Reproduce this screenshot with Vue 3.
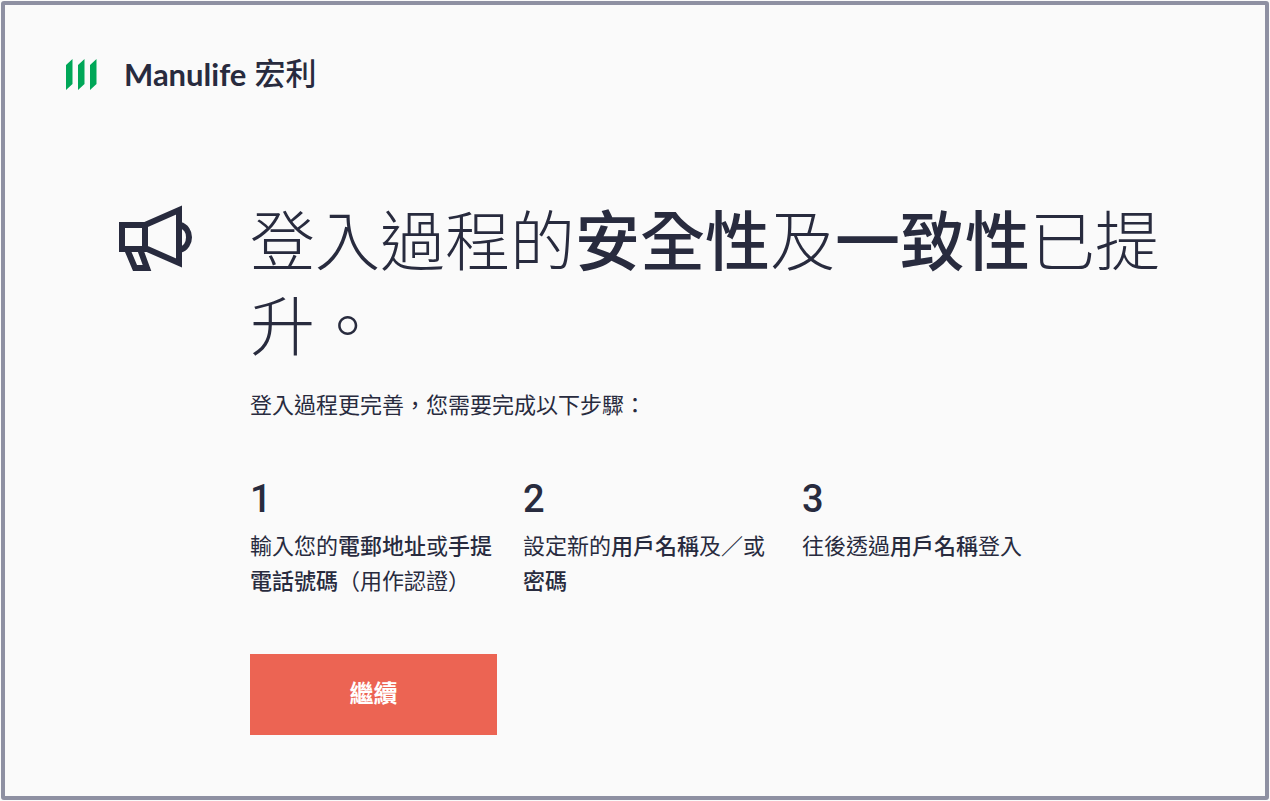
<script setup>
const steps = [
  { n: 1, parts: [['輸入您的', 0], ['電郵地址', 1], ['或', 0], ['手提電話號碼', 1], ['（用作認證）', 0]] },
  { n: 2, parts: [['設定新的', 0], ['用戶名稱', 1], ['及／或', 0], ['密碼', 1]] },
  { n: 3, parts: [['往後透過', 0], ['用戶名稱', 1], ['登入', 0]] },
]
</script>

<template>
  <main class="page">
    <header class="brand">
      <svg class="mark" viewBox="0 0 32 32" aria-hidden="true">
        <path d="M0 7 6.500 1v25L0 32zM12 7l6.500-6v25L12 32zM24 7l6.500-6v25L24 32z" fill="#00a758" />
      </svg>
      <span class="name">Manulife</span>
      <span class="zh">宏利</span>
    </header>
    <div class="content">
      <svg class="horn" viewBox="0 0 76 68" aria-hidden="true">
        <g fill="none" stroke="#282b3e" stroke-width="6">
          <path d="M4 20h23v24H4zM27 20 61 5v53L27 43M62 20c12 3 12 21 0 25M9 44l8 19h12l-7-19" />
        </g>
      </svg>
      <section class="body">
        <h1>登入過程的<b>安全性</b>及<b>一致性</b>已提升。</h1>
        <p class="intro">登入過程更完善，您需要完成以下步驟：</p>
        <ol class="steps">
          <li v-for="s in steps" :key="s.n">
            <span class="num">{{ s.n }}</span>
            <p><component :is="p[1] ? 'b' : 'span'" v-for="p in s.parts" :key="p[0]">{{ p[0] }}</component></p>
          </li>
        </ol>
        <button type="button">繼續</button>
      </section>
    </div>
  </main>
</template>

<style>
body { background: #fafafa; }
</style>
<style scoped>
.page { box-sizing: border-box; min-height: calc(100vh - 2px); margin: 1px; padding: 52px 60px 56px; border: 4px solid #8e90a2; border-radius: 3px; background: #fafafa; color: #282b3e; font-family: "Noto Sans CJK TC", sans-serif; }
.brand { display: flex; align-items: center; height: 34px; }
.mark { width: 32px; height: 32px; margin: 0 26px 0 1px; }
.name { font: 700 31px/34px Lato, sans-serif; margin-right: 8px; }
.zh { padding-bottom: 4px; font-size: 31px; line-height: 34px; font-weight: 500; }
.content { display: grid; grid-template-columns: 76px 1fr; column-gap: 56px; padding: 104px 34px 0 53px; }
.horn { width: 76px; height: 68px; margin-top: 10px; }
h1 { margin: 0; font-size: 65px; line-height: 85px; font-weight: 300; }
h1 b { font-weight: 500; }
.intro { margin: 21px 0 0; font-size: 22px; line-height: 34px; }
.steps { display: grid; grid-template-columns: 244px 250px 1fr; column-gap: 29px; list-style: none; margin: 56px 0 0; padding: 0; }
.num { display: block; font: 500 38px/46px Roboto, sans-serif; }
.steps p { margin: 5px 0 0; font-size: 22px; line-height: 35px; }
.steps b { font-weight: 500; }
button { width: 247px; height: 81px; margin-top: 57px; padding: 0 0 5px; border: 0; background: #ec6453; color: #fff; font: 700 24px/36px "Noto Sans CJK TC", sans-serif; }
</style>
